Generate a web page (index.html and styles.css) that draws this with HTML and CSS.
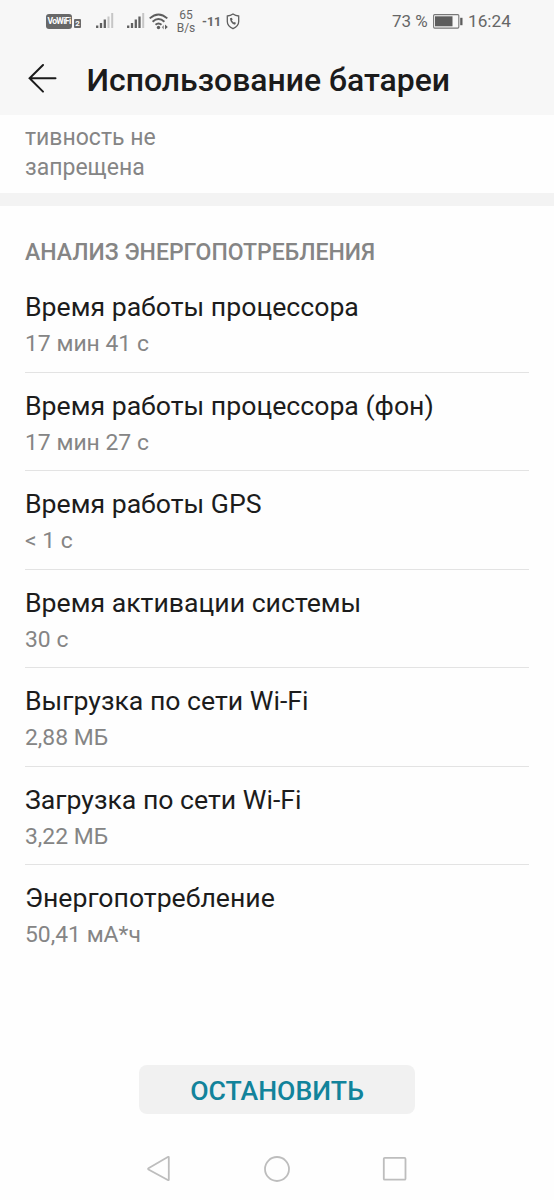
FILE: index.html
```html
<!DOCTYPE html>
<html lang="ru">
<head>
<meta charset="utf-8">
<title>Использование батареи</title>
<link rel="stylesheet" href="styles.css">
</head>
<body>
<div class="screen">
  <header class="header">
    <div class="status">
      <span class="vowifi">VoWiFi</span>
      <span class="sim">2</span>
      <svg class="signal" width="18" height="16" viewBox="0 0 18 16"><path d="M1.2 12.5V15M5 10V15M8.800 6.500V15" stroke="#606060" stroke-width="2.300"/><path d="M12.500 3.500V15M16.200 0V15" stroke="#c6c6c6" stroke-width="2"/></svg>
      <svg class="signal second" width="18" height="16" viewBox="0 0 18 16"><path d="M1.200 12.500V15M5 10V15M8.800 6.500V15M12.500 3.500V15" stroke="#606060" stroke-width="2.300"/><path d="M16.200 0V15" stroke="#c6c6c6" stroke-width="2"/></svg>
      <svg class="wifi" width="20" height="17" viewBox="0 0 20 17"><g fill="none" stroke="#5e5e5e" stroke-width="1.900"><path d="M.7 5.400Q9.500-2.600 18.300 5.400"/><path d="M3.600 8.700Q9.500 3.300 15.400 8.700"/><path d="M6.500 11.800Q9.500 9.200 12.500 11.800"/></g><circle cx="9.500" cy="14.500" r="1.700" fill="#5e5e5e"/><path d="M14.800 12v4.600l-2-2.300z" fill="#8a8a8a"/><path d="M16 11.500v5l2.800-2.500z" fill="#5e5e5e"/></svg>
      <span class="speed"><span>65</span><span>B/s</span></span>
      <span class="temp">-11</span>
      <svg class="shield" width="14" height="17" viewBox="0 0 14 17"><path d="M7 1Q9.500 2.800 12.700 3v5.500Q12.700 13 7 15.700 1.300 13 1.300 8.500V3Q4.500 2.800 7 1z" fill="none" stroke="#606060" stroke-width="1.300"/><path d="M5 5.200Q4.300 8.800 8.800 11.200" fill="none" stroke="#606060" stroke-width="1.500"/><path d="M5 5l.8 2M7.600 9.800l2 .900" stroke="#606060" stroke-width="1.900"/></svg>
      <span class="percent">73 %</span>
      <svg class="battery" width="30" height="15" viewBox="0 0 30 15"><rect x=".600" y=".600" width="25.200" height="13.500" rx="1" fill="none" stroke="#777" stroke-width="1.100"/><path d="M2 2.300h17.500v10H2z" fill="#5d5d5d"/><path d="M27.200 3.800h2.300v7.400h-2.300z" fill="#5d5d5d"/></svg>
      <span class="clock">16:24</span>
    </div>
    <div class="titlebar">
      <svg class="back" width="30" height="30" viewBox="0 0 30 30"><path d="M27.500 15.300H1.600M15 2L1.600 15.300 15 28.600" fill="none" stroke="#1b1b1b" stroke-width="2" stroke-linecap="round"/></svg>
      <h1 class="title">Использование батареи</h1>
    </div>
  </header>
  <p class="summary">тивность не<br>запрещена</p>
  <main class="details">
    <h2 class="section"><span>АНАЛИЗ ЭНЕРГОПОТРЕБЛЕНИЯ</span></h2>
    <div class="row"><div class="name">Время работы процессора</div><div class="value">17 мин 41 с</div></div>
    <div class="row"><div class="name">Время работы процессора (фон)</div><div class="value">17 мин 27 с</div></div>
    <div class="row"><div class="name">Время работы GPS</div><div class="value">&lt; 1 с</div></div>
    <div class="row"><div class="name">Время активации системы</div><div class="value">30 с</div></div>
    <div class="row"><div class="name">Выгрузка по сети Wi-Fi</div><div class="value">2,88 МБ</div></div>
    <div class="row"><div class="name">Загрузка по сети Wi-Fi</div><div class="value">3,22 МБ</div></div>
    <div class="row"><div class="name">Энергопотребление</div><div class="value">50,41 мА*ч</div></div>
  </main>
  <button class="stop">ОСТАНОВИТЬ</button>
  <nav class="nav">
    <svg width="26" height="28" viewBox="0 0 26 28"><path d="M22.800 2.500v22Q22.800 25.600 21.800 25L2.500 14.500Q1.600 13.800 2.500 13.200L21.800 2Q22.800 1.500 22.800 2.500z" fill="none" stroke="#bdbdbd" stroke-width="1.800"/></svg>
    <svg width="28" height="28" viewBox="0 0 28 28"><circle cx="14" cy="14" r="12" fill="none" stroke="#bdbdbd" stroke-width="1.800"/></svg>
    <svg width="26" height="28" viewBox="0 0 26 28"><rect x="1.800" y="2.900" width="21.700" height="21.800" rx="1" fill="none" stroke="#bdbdbd" stroke-width="1.800"/></svg>
  </nav>
</div>
</body>
</html>
```
FILE: styles.css
```css
* { box-sizing: border-box; }
body { margin: 0; background: #fefefe; font-family: Roboto, "Noto Sans", sans-serif; }
.screen { width: 554px; height: 1200px; display: flex; flex-direction: column; overflow: hidden; }
.header { height: 115px; background: #f7f7f7; flex: none; }
.status { display: flex; align-items: center; height: 42px; padding-left: 46px; color: #666; white-space: nowrap; }
.status > * { flex: none; }
.vowifi { width: 26px; height: 15px; border-radius: 3px; background: #686868; color: #fff; font: bold 8.5px/15px Roboto, sans-serif; letter-spacing: -0.6px; text-align: center; }
.sim { width: 7px; height: 9px; margin: 5px 0 0 2px; border-radius: 1px; background: #6a6a6a; color: #fff; font: bold 8px/9px Roboto, sans-serif; text-align: center; }
.signal { margin-left: 15px; }
.signal.second { margin-left: 13px; }
.wifi { margin-left: 4px; }
.speed { display: flex; flex-direction: column; align-items: center; width: 18px; margin-left: 8px; font-size: 12px; line-height: 13px; padding-top: 1px; }
.temp { width: 18px; margin-left: 7px; font-size: 12.5px; font-weight: 700; }
.shield { margin-left: 6px; }
.percent { width: 37px; margin-left: 152px; font-size: 17px; }
.battery { margin-left: 4px; }
.clock { margin-left: 5px; font-size: 17.2px; }
.titlebar { display: flex; align-items: center; height: 73px; padding: 0 0 0 28px; }
.back { margin-top: -1px; }
.title { margin: 3px 0 0 28.500px; font-size: 31.950px; line-height: 36px; font-weight: 500; color: #1b1b1b; white-space: nowrap; }
.summary { flex: none; height: 78px; margin: 0; padding: 8px 25px 0; font-size: 23px; line-height: 30px; color: #858585; }
.details { flex: none; border-top: 13px solid #f3f3f3; padding: 0 25px; }
.section { height: 68px; margin: 0; padding-top: 32px; font-size: 23px; line-height: 30px; font-weight: 500; color: #858585; white-space: nowrap; }
.row { height: 98.500px; padding-top: 15px; border-bottom: 1px solid #e3e3e3; }
.row:last-child { border-bottom: 0; }
.name { font-size: 26.650px; line-height: 36px; color: #1c1c1c; white-space: nowrap; }
.value { margin-top: 3px; font-size: 22.900px; line-height: 32px; color: #858585; }
.stop { flex: none; width: 276px; height: 49px; margin: 101.500px 0 0 139px; padding: 3px 0 0; border: 0; border-radius: 8px; background: #f1f1f1; color: #12839b; font: 500 26.650px/34px Roboto, sans-serif; }
.nav { display: flex; justify-content: space-between; margin: 41px 146px 0 146px; }
```
